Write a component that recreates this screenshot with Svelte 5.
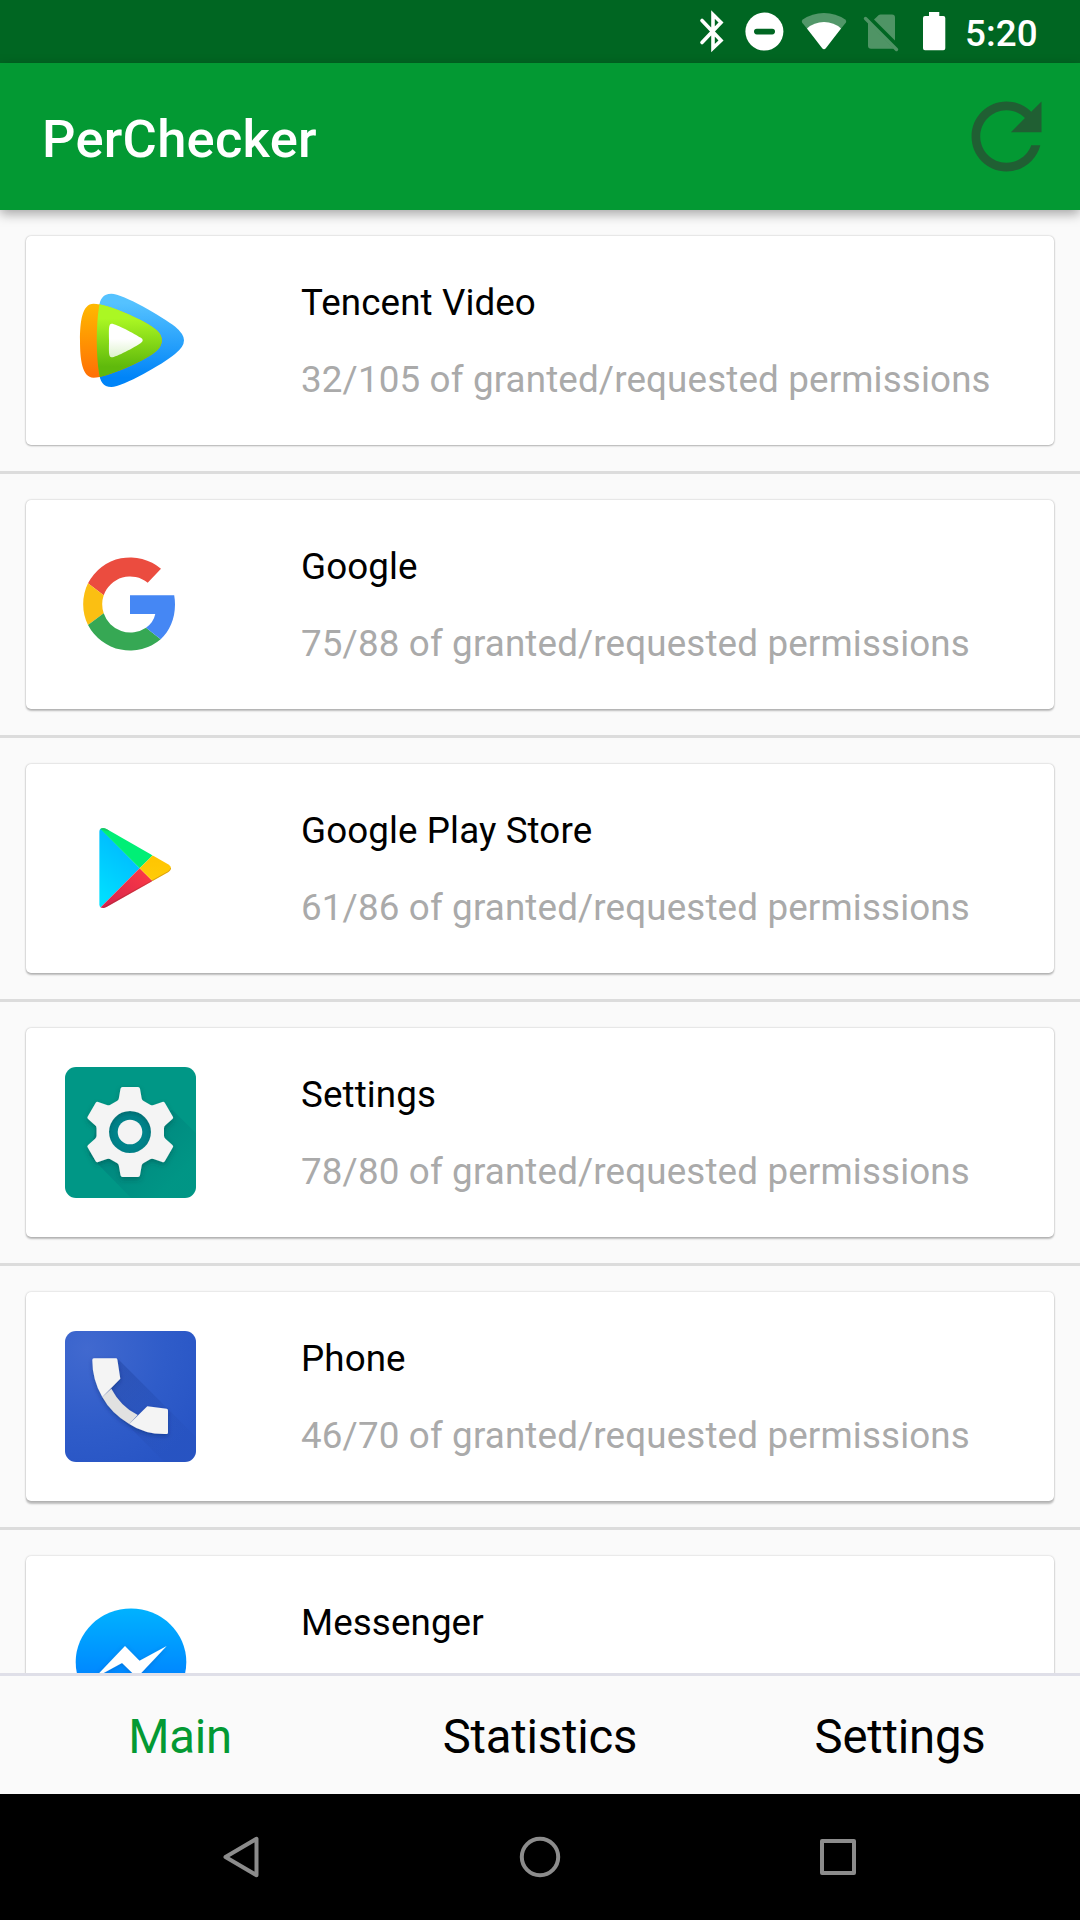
<script>
  const apps = [
    { icon: 'tencent', name: 'Tencent Video', granted: 32, requested: 105 },
    { icon: 'google', name: 'Google', granted: 75, requested: 88 },
    { icon: 'play', name: 'Google Play Store', granted: 61, requested: 86 },
    { icon: 'settings', name: 'Settings', granted: 78, requested: 80 },
    { icon: 'phone', name: 'Phone', granted: 46, requested: 70 },
    { icon: 'messenger', name: 'Messenger' },
  ];
  const tabs = ['Main', 'Statistics', 'Settings'];
  let active = $state('Main');
</script>

<div class="screen">
  <div class="status">
    <svg width="36" height="63" viewBox="696 0 36 63">
      <path d="M702 20.5 L721 40.5 L713 48 V14.5 L721 22.5 L702 42.5" fill="none" stroke="#fff" stroke-width="3.6" stroke-linecap="round" stroke-linejoin="miter" />
    </svg>
    <svg width="60" height="63" viewBox="732 0 60 63">
      <circle cx="764.4" cy="31.6" r="19" fill="#fff" />
      <rect x="754" y="28.8" width="21" height="5.6" rx="2.8" fill="#006622" />
    </svg>
    <svg width="64" height="63" viewBox="792 0 64 63">
      <path d="M824 49.3 L802.2 22.8 Q801 21 802.8 19.6 Q812 13 824 13 Q836 13 845.2 19.6 Q847 21 845.8 22.8 Z" fill="#fff" opacity=".32" />
      <path d="M824 49.3 Q823 49.3 822 48 L807 28.5 Q814 22 824 22 Q834 22 841 28.5 L826 48 Q825 49.3 824 49.3 Z" fill="#fff" />
    </svg>
    <svg width="56" height="63" viewBox="856 0 56 63">
      <g fill="#4f9465">
        <path d="M874 19.5 L878.800 14.900 Q879.500 14.400 880.500 14.400 H892 Q895 14.400 895 17.400 V40.500 Z" />
        <path d="M868 22.300 L893.800 48.800 H871 Q868 48.800 868 45.800 Z" />
        <path d="M865.500 18.500 L896.500 49.500" stroke="#4f9465" stroke-width="3.400" stroke-linecap="round" />
      </g>
    </svg>
    <svg width="38" height="63" viewBox="912 0 38 63">
      <path d="M929 12 H939.3 V16 H943.3 Q945.3 16 945.3 18 V48.3 Q945.3 50.3 943.3 50.3 H925 Q923 50.3 923 48.3 V18 Q923 16 925 16 H929 Z" fill="#fff" />
    </svg>
    <span class="clock">5:20</span>
  </div>

  <header>
    <h1>PerChecker</h1>
    <button class="reload" aria-label="Reload">
      <svg width="105" height="105" viewBox="0 0 24 24">
        <path fill="#205f33" d="M17.65 6.35C16.2 4.9 14.21 4 12 4c-4.42 0-7.99 3.58-7.99 8s3.57 8 7.99 8c3.73 0 6.84-2.55 7.73-6h-2.08c-.82 2.33-3.04 4-5.65 4-3.31 0-6-2.69-6-6s2.69-6 6-6c1.66 0 3.14.69 4.22 1.78L13 11h7V4l-2.35 2.35z" />
      </svg>
    </button>
  </header>

  <main>
    {#each apps as app, i}
      <section class="item">
        <article class="card" style:--depth={i}>
          <svg class="icon" width="131" height="131" viewBox="0 0 131 131">
            {#if app.icon === 'tencent'}
              <defs>
                <linearGradient id="tb" x1="0" y1="0" x2="0" y2="1"><stop offset=".1" stop-color="#55c2ff" /><stop offset=".9" stop-color="#0084f8" /></linearGradient>
                <linearGradient id="to" x1="0" y1="0" x2="0" y2="1"><stop offset="0" stop-color="#ffb900" /><stop offset="1" stop-color="#ff6f05" /></linearGradient>
                <linearGradient id="tg" x1="0" y1="0" x2="0" y2="1"><stop offset=".2" stop-color="#abf723" /><stop offset=".85" stop-color="#5fb90c" /></linearGradient>
                <linearGradient id="tw" x1="0" y1="0" x2="0" y2="1"><stop offset=".45" stop-color="#fff" /><stop offset="1" stop-color="#ddf2cc" /></linearGradient>
                <clipPath id="tc"><path d="M46.4 18.7C58 18.7 98 42 110 51.5Q119 59 119 65.3Q119 72 110 79C98 89 58 112 46.4 112C38 112 35 106 34 98C31 80 31 50 34 32C35 24 38 18.7 46.4 18.7Z" /></clipPath>
              </defs>
              <path fill="url(#tb)" d="M46.4 18.7C58 18.7 98 42 110 51.5Q119 59 119 65.3Q119 72 110 79C98 89 58 112 46.4 112C38 112 35 106 34 98C31 80 31 50 34 32C35 24 38 18.7 46.4 18.7Z" />
              <path fill="url(#to)" d="M28.6 28.7C42 28.7 82 46 92 55.5Q96.8 60 96.8 65.3Q96.8 71 92 75.5C82 85 42 102.7 28.6 102.7C17 102.7 15 84 15 65.3C15 47 17 28.7 28.6 28.7Z" />
              <path fill="url(#tg)" clip-path="url(#tc)" d="M28.6 28.7C42 28.7 82 46 92 55.5Q96.8 60 96.8 65.3Q96.8 71 92 75.5C82 85 42 102.7 28.6 102.7C17 102.7 15 84 15 65.3C15 47 17 28.7 28.6 28.7Z" />
              <path fill="url(#tw)" d="M46.6 48.7C51 48.7 70 59 75.5 62.6Q80 65.3 75.5 68.2C70 72 51 82.3 46.6 82.3C43.2 82.3 44 75 44 65.3C44 56 43.2 48.7 46.6 48.7Z" />
            {:else if app.icon === 'google'}
              <path fill="#eb4c3f" d="M23 44.3A47.5 47.5 0 0 1 96 29.7L82.7 43.7A28 28 0 0 0 38.7 56.3Z" />
              <path fill="#fbbf12" d="M23 44.3A47.5 47.5 0 0 0 23 86L38.7 74.3A28 28 0 0 1 38.7 56.3Z" />
              <path fill="#36a854" d="M23 86A47.5 47.5 0 0 0 95.7 100.3L81 88.7A28 28 0 0 1 38.7 74.3Z" />
              <path fill="#4587f4" d="M65 56.3H109.2Q110 61 110 65.5C110 80 104.5 92 95.7 100.3L81 88.7Q88.5 83.5 90.3 75H65Z" />
            {:else if app.icon === 'play'}
              <defs>
                <linearGradient id="pb" x1=".6" y1="0" x2=".2" y2="1"><stop offset="0" stop-color="#00b4ff" /><stop offset="1" stop-color="#00e2ff" /></linearGradient>
                <linearGradient id="pr" x1="1" y1="0" x2="0" y2="1"><stop offset="0" stop-color="#ff3b45" /><stop offset="1" stop-color="#d0204e" /></linearGradient>
                <linearGradient id="py" x1="0" y1="0" x2="0" y2="1"><stop offset="0" stop-color="#ffc400" /><stop offset="1" stop-color="#ffcc08" /></linearGradient>
                <clipPath id="pc"><path d="M34.4 28.5Q34.4 25 38.1 25Q39.5 25 42 26.3L103.5 61.5Q106 63 106 65.3Q106 67.5 103.500 69L42 103.700Q39.500 105 38.100 105Q34.400 105 34.400 101.500Z" /></clipPath>
              </defs>
              <g clip-path="url(#pc)">
                <path fill="url(#pb)" d="M34 24V106L74.7 65.3Z" />
                <path fill="#00ef76" d="M34 24.6L74.7 65.3L87.5 52.5L60 20H34Z" />
                <path fill="url(#pr)" d="M34 106L74.7 65.3L87.5 78.1L60 110Z" />
                <path fill="url(#py)" d="M74.7 65.3L87.5 52.5L110 50V80L87.5 78.1Z" />
                <path fill="none" stroke="#7b3020" stroke-opacity=".28" stroke-width="1.6" d="M38 105.3L103.5 68.9Q106 67.4 106 65.3" />
                <path fill="none" stroke="#26b060" stroke-opacity=".6" stroke-width="3" d="M36 25L44 27" />
              </g>
            {:else if app.icon === 'settings'}
              <defs>
                <clipPath id="sq"><rect width="131" height="131" rx="11" /></clipPath>
                <linearGradient id="ss" gradientUnits="userSpaceOnUse" x1="65" y1="65" x2="112" y2="112"><stop offset="0" stop-color="#006a70" stop-opacity=".35" /><stop offset="1" stop-color="#006a70" stop-opacity=".03" /></linearGradient>
                <filter id="sh" x="-20%" y="-20%" width="140%" height="150%"><feDropShadow dx="0" dy="2.5" stdDeviation="2.5" flood-color="#003b38" flood-opacity=".36" /></filter>
              </defs>
              <g clip-path="url(#sq)">
                <rect width="131" height="131" fill="#009786" />
                <path fill="url(#ss)" d="M107.5 43L140 75V140H75L24 88L31 60Z" />
                <circle cx="65" cy="65" r="22" fill="#00838a" />
                <path filter="url(#sh)" fill="#f4f4f4" fill-rule="evenodd" d="M57.5 20H73Q74.7 20 75 21.7L76.7 31.5Q77 33.2 78.6 34L85.6 38Q87 38.7 88.6 38L97.3 34.9Q98.9 34.3 99.8 35.8L107.9 49.7Q108.7 51 107.4 52.1L100.4 58.3Q98.9 59.5 99 61.2V68.8Q98.9 70.5 100.4 71.7L107.4 77.9Q108.7 79 107.9 80.3L99.8 94.2Q98.9 95.7 97.3 95.1L88.6 92Q87 91.3 85.6 92L78.6 96Q77 96.8 76.7 98.5L75 108.3Q74.7 110 73 110H57.5Q55.8 110 55.5 108.3L53.8 98.5Q53.5 96.8 51.9 96L44.9 92Q43.5 91.3 41.9 92L33.2 95.1Q31.6 95.7 30.7 94.2L22.6 80.3Q21.8 79 23.1 77.9L30.1 71.7Q31.6 70.5 31.5 68.8V61.2Q31.6 59.5 30.1 58.3L23.1 52.1Q21.8 51 22.6 49.7L30.7 35.8Q31.6 34.3 33.2 34.9L41.9 38Q43.5 38.7 44.9 38L51.9 34Q53.5 33.2 53.8 31.5L55.5 21.7Q55.8 20 57.5 20ZM65 44A21 21 0 1 0 65 86A21 21 0 1 0 65 44Z" />
                <circle cx="65" cy="65" r="12.3" fill="#f4f4f4" />
              </g>
            {:else if app.icon === 'phone'}
              <defs>
                <clipPath id="pq"><rect width="131" height="131" rx="11" /></clipPath>
                <radialGradient id="pbg" gradientUnits="userSpaceOnUse" cx="22" cy="18" r="130"><stop offset="0" stop-color="#4169cf" /><stop offset=".6" stop-color="#2f5cc9" /><stop offset="1" stop-color="#2855c5" /></radialGradient>
                <linearGradient id="ps" gradientUnits="userSpaceOnUse" x1="50" y1="50" x2="108" y2="108"><stop offset="0" stop-color="#1f429f" stop-opacity=".42" /><stop offset="1" stop-color="#1f429f" stop-opacity=".08" /></linearGradient>
                <filter id="psh" x="-20%" y="-20%" width="140%" height="150%"><feDropShadow dx="0" dy="2" stdDeviation="2.3" flood-color="#0a225f" flood-opacity=".4" /></filter>
              </defs>
              <g clip-path="url(#pq)">
                <rect width="131" height="131" fill="url(#pbg)" />
                <path fill="url(#ps)" d="M53 28L103 78L140 115V140H108L37 68Z" />
                <g filter="url(#psh)">
                  <path fill="#e1e1e1" d="M46.3 57.7Q56 76 72.7 84L64.3 93Q46 82 37.3 66Z" />
                  <path fill="#f4f4f4" d="M28.8 27.3H50.8Q52.2 27.3 52.4 28.7L55.3 47.7L37.3 66Q27.3 49 27.3 29Q27.3 27.3 28.8 27.3Z" />
                  <path fill="#f4f4f4" d="M82.3 75.2L101.6 77.8Q103 78 103 79.5V101.5Q103 103 101.5 103Q80 103.5 64.3 93Z" />
                </g>
              </g>
            {:else}
              <defs>
                <linearGradient id="mb" x1="0" y1="0" x2="0" y2="1"><stop offset="0" stop-color="#00b2ff" /><stop offset="1" stop-color="#006dff" /></linearGradient>
                <filter id="msh" x="-20%" y="-20%" width="140%" height="150%"><feDropShadow dx="0" dy="1" stdDeviation="2" flood-color="#003f9f" flood-opacity=".35" /></filter>
              </defs>
              <ellipse cx="66" cy="67" rx="55.3" ry="53.5" fill="url(#mb)" />
              <path filter="url(#msh)" fill="#fff" d="M60 51L74.5 65.7L101.7 51L72 82.5L57 68L29.5 83Z" />
            {/if}
          </svg>
          <div class="text">
            <div class="name">{app.name}</div>
            {#if app.requested}
              <div class="detail">{app.granted}/{app.requested} of granted/requested permissions</div>
            {/if}
          </div>
        </article>
      </section>
    {/each}
  </main>

  <nav class="tabs">
    {#each tabs as tab}
      <button class="tab" class:active={active === tab} onclick={() => (active = tab)}>{tab}</button>
    {/each}
  </nav>

  <div class="system">
    <svg width="44" height="44" viewBox="0 0 44 44"><path d="M36.5 3.8V40.2L5.5 22Z" /></svg>
    <svg width="44" height="44" viewBox="0 0 44 44"><circle cx="22" cy="22" r="18.2" /></svg>
    <svg width="44" height="44" viewBox="0 0 44 44"><rect x="6" y="6" width="32" height="32" /></svg>
  </div>
</div>

<style>
  :global(body) { margin: 0; }
  .screen {
    display: flex;
    flex-direction: column;
    width: 1080px;
    height: 1920px;
    overflow: hidden;
    background: #fafafa;
    font-family: Roboto, sans-serif;
    color: #000;
  }
  button {
    padding: 0;
    border: 0;
    background: none;
    font: inherit;
    color: inherit;
  }
  svg { display: block; flex: none; }
  .status {
    flex: none;
    display: flex;
    height: 63px;
    padding-left: 696px;
    background: #006622;
  }
  .clock {
    margin-left: 15px;
    font-size: 36.75px;
    font-weight: 500;
    line-height: 68px;
    letter-spacing: .1px;
    color: #fff;
  }
  header {
    flex: none;
    position: relative;
    z-index: 1;
    display: flex;
    align-items: center;
    justify-content: space-between;
    height: 147px;
    padding: 0 21.500px 0 42px;
    box-sizing: border-box;
    background: #039933;
    box-shadow: 0 4px 11px rgba(0, 0, 0, .34);
  }
  h1 {
    margin: 5px 0 0;
    font-size: 52.5px;
    font-weight: 500;
    line-height: 62px;
    letter-spacing: .25px;
    color: #fff;
  }
  main {
    flex: none;
    height: 1463px;
    overflow: hidden;
  }
  .item {
    padding: 26px;
    border-bottom: 3px solid #dcdcdc;
  }
  .card {
    display: flex;
    align-items: center;
    height: 209px;
    padding-left: 39px;
    box-sizing: border-box;
    border-radius: 5px;
    background: #fff;
    box-shadow:
      0 0 2px rgba(0, 0, 0, .24),
      0 calc(1px + var(--depth) * .3px) 2px rgba(0, 0, 0, .24);
  }
  .text {
    min-height: 120px;
    margin-left: 105px;
    font-size: 36.75px;
    line-height: 43px;
    white-space: nowrap;
  }
  .name { letter-spacing: .1px; }
  .detail {
    margin-top: 34px;
    letter-spacing: .15px;
    color: #aaa;
  }
  .tabs {
    flex: none;
    display: grid;
    grid-template-columns: repeat(3, 1fr);
    height: 121px;
    box-sizing: border-box;
    border-top: 3px solid #dfdfe8;
  }
  .tab {
    padding-top: 4px;
    font-size: 47.25px;
    letter-spacing: -.22px;
  }
  .tab.active { color: #039933; }
  .system {
    flex: 1;
    display: flex;
    align-items: center;
    justify-content: space-between;
    padding: 0 220px;
    background: #000;
  }
  .system svg {
    fill: none;
    stroke: #8c8c8c;
    stroke-width: 4;
    stroke-linejoin: round;
  }
</style>
